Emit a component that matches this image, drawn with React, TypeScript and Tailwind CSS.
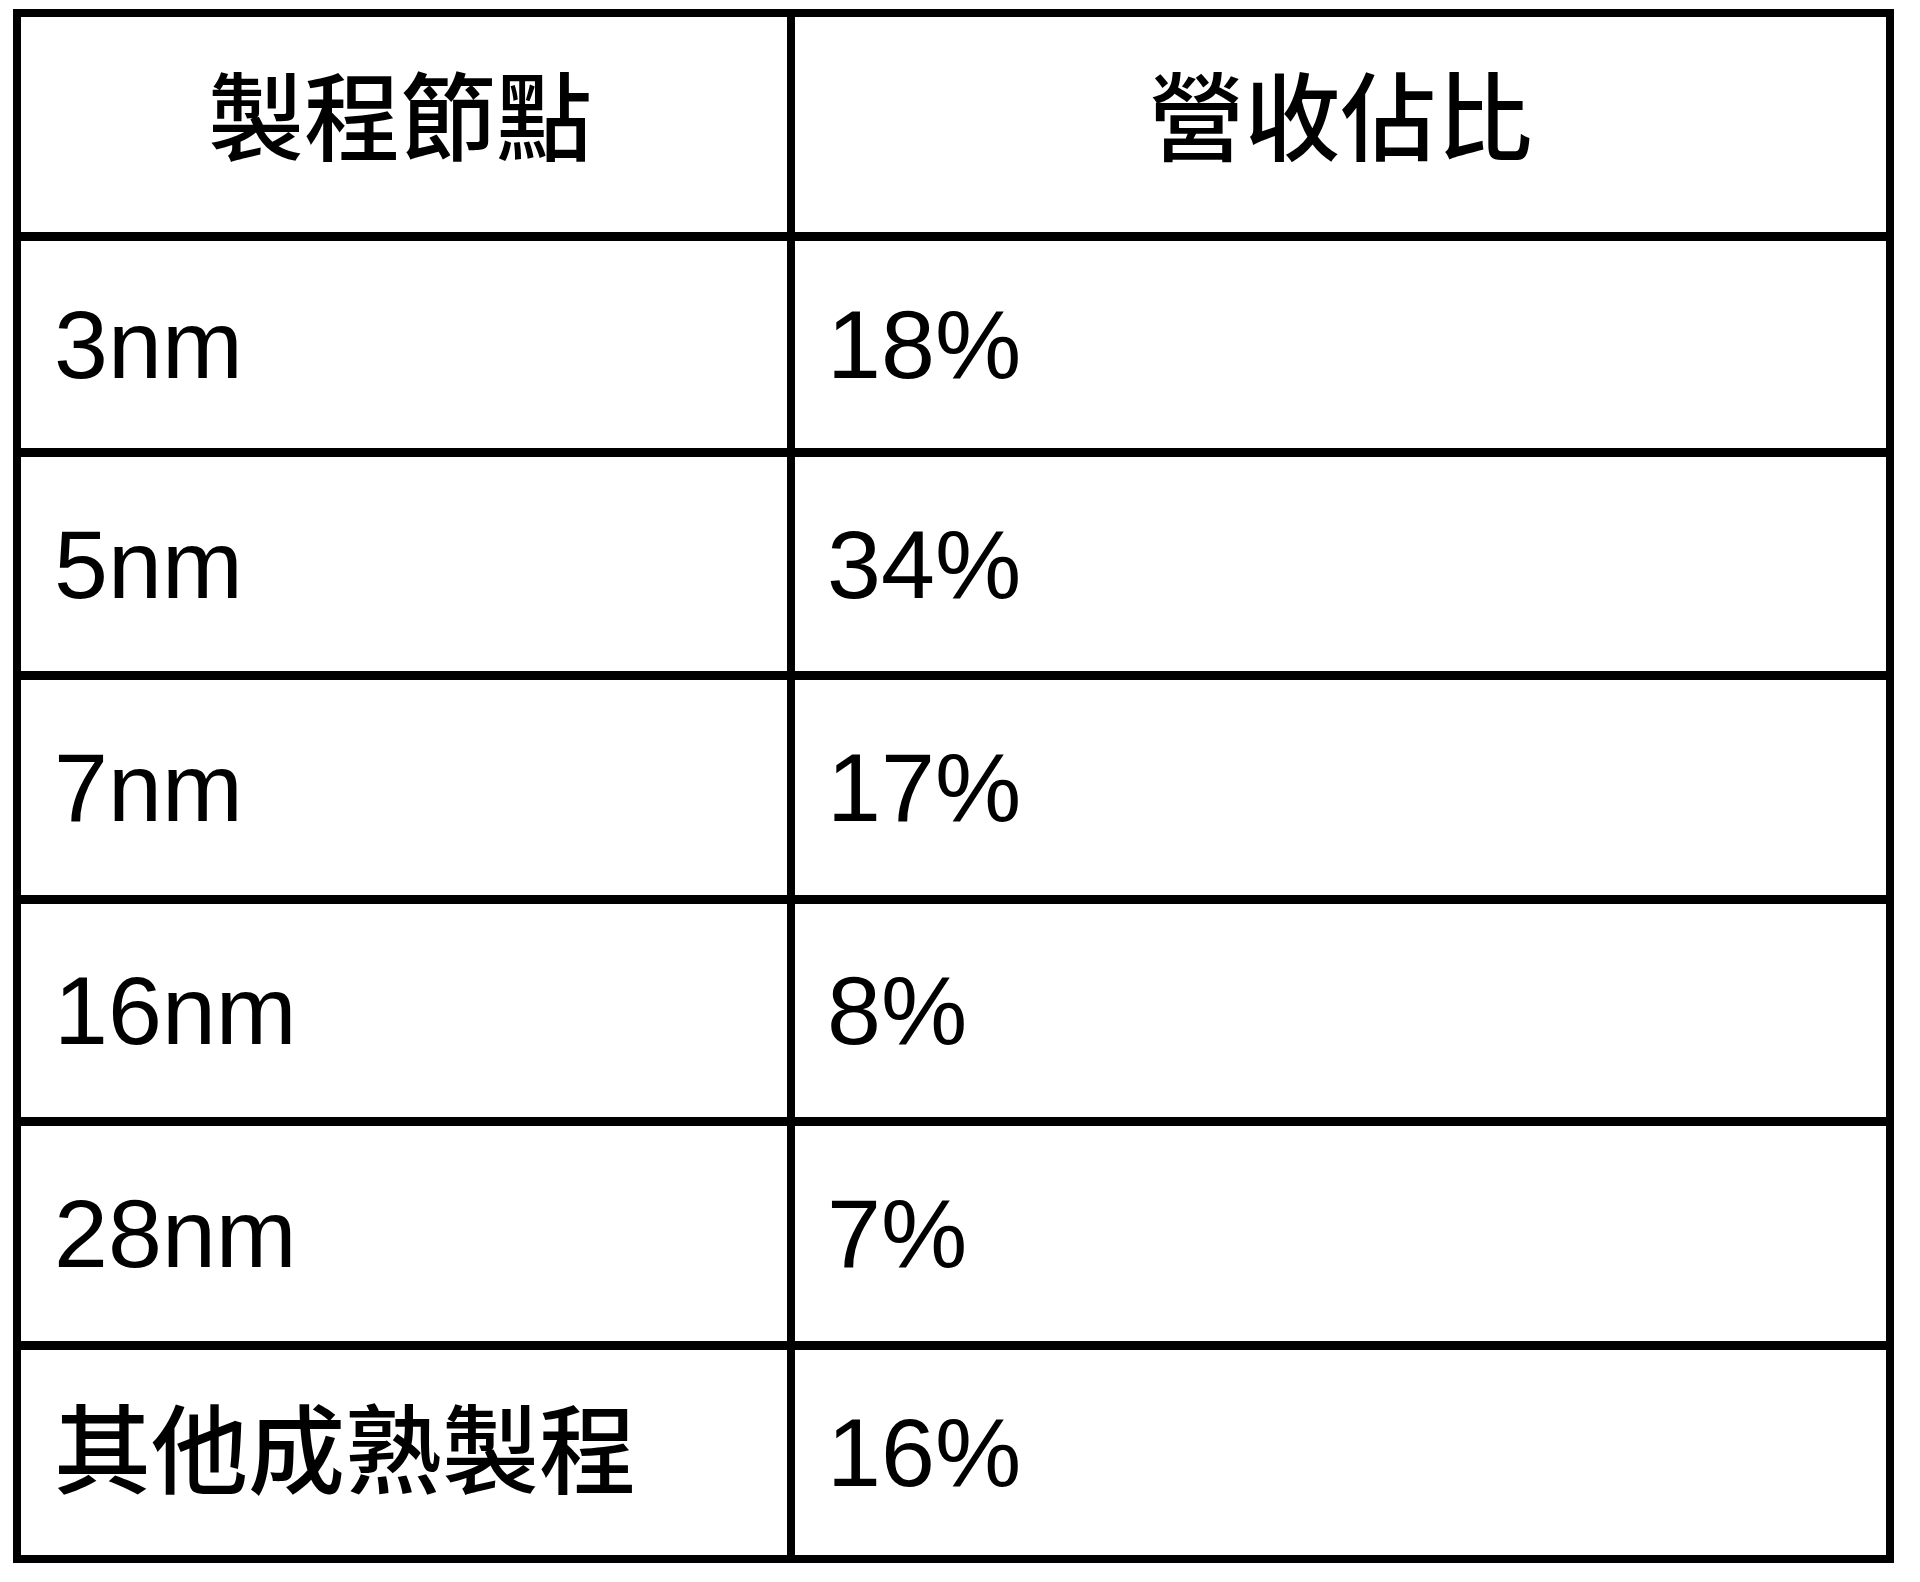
// heights include the 9px bottom rule (border-box), except the last row
const rows = [
  { node: '3nm', share: '18%', h: 'h-[216px]' },
  { node: '5nm', share: '34%', h: 'h-[223px]' },
  { node: '7nm', share: '17%', h: 'h-[224px]' },
  { node: '16nm', share: '8%', h: 'h-[222px]' },
  { node: '28nm', share: '7%', h: 'h-[224px]' },
  { node: '其他成熟製程', share: '16%', h: 'h-[205px]' },
];

export default function App() {
  return (
    <div className="min-h-[1582px] w-[1920px] bg-white pl-[13px] pt-[9px] font-['Liberation_Sans','Noto_Sans_CJK_TC',sans-serif] text-[97px] font-medium leading-none text-black">
      <div className="w-[1881px] border-[8px] border-black">
        {/* Header */}
        <div className="grid h-[224px] grid-cols-[774px_1fr] border-b-[9px] border-black">
          <div className="flex items-center justify-center border-r-[8px] border-black pb-[10px] pr-[8px] text-[96px]">
            製程節點
          </div>
          <div className="flex items-center justify-center pb-[10px] text-[96px]">營收佔比</div>
        </div>

        {/* Body */}
        {rows.map((row, i) => (
          <div
            key={row.node}
            className={`grid grid-cols-[774px_1fr] ${row.h} ${
              i < rows.length - 1 ? 'border-b-[9px] border-black' : ''
            }`}
          >
            <div className="flex items-center border-r-[8px] border-black pl-[33px]">{row.node}</div>
            <div className="flex items-center pl-[32px]">{row.share}</div>
          </div>
        ))}
      </div>
    </div>
  );
}
